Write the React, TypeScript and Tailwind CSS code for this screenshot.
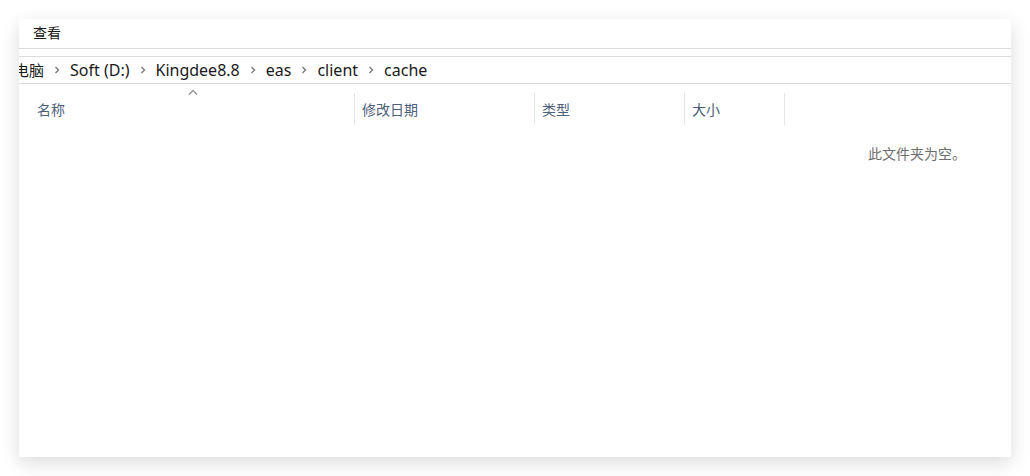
import React from 'react';

const crumbs = ['Soft (D:)', 'Kingdee8.8', 'eas', 'client', 'cache'];

function Chevron() {
  return (
    <svg width="8" height="10" viewBox="0 0 8 10" className="mx-[9px] shrink-0">
      <path d="M2.5 2 L5.5 5 L2.5 8" fill="none" stroke="#7a7a7a" strokeWidth="1.4" />
    </svg>
  );
}

export default function App() {
  return (
    <div className="w-[1030px] h-[476px] bg-white p-[19px] overflow-hidden font-['Noto_Sans','Noto_Sans_CJK_SC',sans-serif]">
      {/* 窗口 */}
      <div className="w-[992px] h-[438px] bg-white shadow-[0_6px_18px_rgba(0,0,0,0.14)] flex flex-col">
        {/* 菜单 */}
        <div className="h-[30px] border-b border-[#dcdcdc] flex items-center pl-[14px] text-[14px] text-[#1a1a1a]">
          <span className="-mt-[3px]">查看</span>
        </div>
        <div className="h-[8px] border-b border-[#dcdcdc]" />

        {/* 地址栏 */}
        <div className="h-[27px] border-b border-[#dcdcdc] flex items-center overflow-hidden text-[16px] text-[#1a1a1a]">
          <span className="-ml-[20px] text-[15px] shrink-0">此电脑</span>
          {crumbs.map((c) => (
            <React.Fragment key={c}>
              <Chevron />
              <span className="shrink-0">{c}</span>
            </React.Fragment>
          ))}
        </div>

        {/* 列头 */}
        <div className="relative flex h-[32px] mt-[9px] text-[14px] text-[#4c607a]">
          <span className="absolute left-[169px] -top-[4px]">
            <svg width="10" height="6" viewBox="0 0 10 6">
              <path d="M1 5.5 L5 1.5 L9 5.5" fill="none" stroke="#8a8a8a" strokeWidth="1.2" />
            </svg>
          </span>
          <div className="w-[336px] pl-[18px] flex items-center border-r border-[#e5e5e5]">名称</div>
          <div className="w-[180px] pl-[7px] flex items-center border-r border-[#e5e5e5]">修改日期</div>
          <div className="w-[150px] pl-[7px] flex items-center border-r border-[#e5e5e5]">类型</div>
          <div className="w-[100px] pl-[7px] flex items-center border-r border-[#e5e5e5]">大小</div>
        </div>

        {/* 空文件夹 */}
        <div className="flex-1 flex justify-end pr-[45px] pt-[18px]">
          <span className="text-[14px] text-[#6d6d6d]">此文件夹为空。</span>
        </div>
      </div>
    </div>
  );
}
